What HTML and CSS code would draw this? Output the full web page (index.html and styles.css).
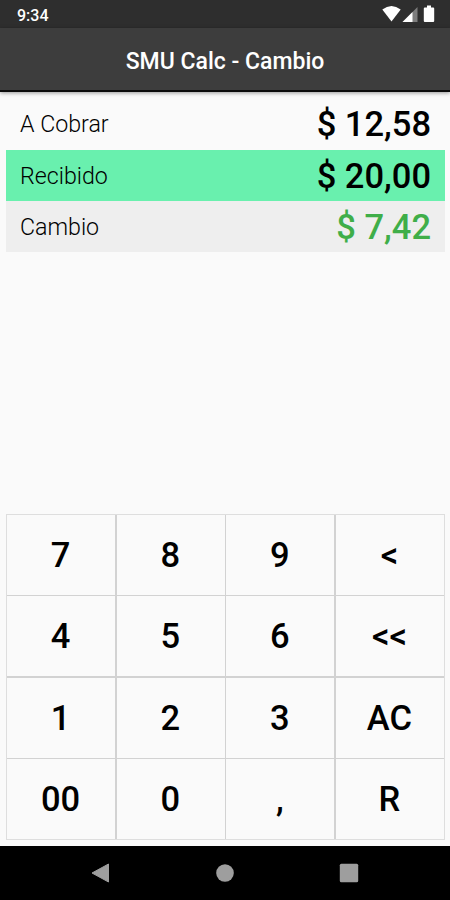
FILE: index.html
```html
<!DOCTYPE html>
<html lang="es">
<head>
    <meta charset="UTF-8">
    <meta name="viewport" content="width=device-width, initial-scale=1.0">
    <title>SMU Calc - Cambio</title>
    <link rel="stylesheet" href="styles.css">
</head>
<body>
    <div class="status-bar">
        <span class="clock">9:34</span>
        <svg class="status-icons" width="56" height="20" viewBox="0 0 56 20">
            <path d="M0.3 5.6 Q9.5 -1.4 18.7 5.6 L9.5 17.4 Z" fill="#fff"/>
            <path d="M35.5 3 V18 H20.5 Z" fill="#7d7d7d"/>
            <path d="M30.5 8 V18 H20.5 Z" fill="#fff"/>
            <path d="M45 1.5 h4 v2 h2.2 q1 0 1 1 v12.5 q0 1 -1 1 h-8.4 q-1 0 -1 -1 v-12.5 q0 -1 1 -1 h2.2 z" fill="#fff"/>
        </svg>
    </div>
    <header class="app-bar">
        <h1>SMU Calc - Cambio</h1>
    </header>
    <main>
        <div class="amounts">
            <div class="row">
                <span class="label">A Cobrar</span>
                <span class="value">$ 12,58</span>
            </div>
            <div class="row active">
                <span class="label">Recibido</span>
                <span class="value">$ 20,00</span>
            </div>
            <div class="row change">
                <span class="label">Cambio</span>
                <span class="value">$ 7,42</span>
            </div>
        </div>
        <div class="keypad">
            <button>7</button>
            <button>8</button>
            <button>9</button>
            <button>&lt;</button>
            <button>4</button>
            <button>5</button>
            <button>6</button>
            <button>&lt;&lt;</button>
            <button>1</button>
            <button>2</button>
            <button>3</button>
            <button>AC</button>
            <button>00</button>
            <button>0</button>
            <button>,</button>
            <button>R</button>
        </div>
    </main>
    <nav class="nav-bar">
        <svg width="20" height="20" viewBox="0 0 20 20"><path d="M17.5 1 V19 L1 10 Z" fill="#9e9e9e" stroke="#9e9e9e" stroke-linejoin="round"/></svg>
        <svg width="20" height="20" viewBox="0 0 20 20"><circle cx="10" cy="10" r="8.8" fill="#9e9e9e"/></svg>
        <svg width="20" height="20" viewBox="0 0 20 20"><rect x="0.8" y="0.8" width="18.4" height="18.4" rx="1.5" fill="#9e9e9e"/></svg>
    </nav>
</body>
</html>
```

FILE: styles.css
```css
:root {
    --bg-color: #fafafa;
    --bar-color: #3d3d3d;
    --active-color: #69f0ae;
    --change-color: #3fae49;
    --line-color: #d2d2d2;
}

* {
    box-sizing: border-box;
}

body {
    margin: 0;
    height: 100vh;
    display: flex;
    flex-direction: column;
    font-family: Roboto, sans-serif;
    background-color: var(--bg-color);
    color: #000;
    overflow: hidden;
}

.status-bar {
    height: 28px;
    padding: 0 12px 0 17px;
    display: flex;
    align-items: center;
    justify-content: space-between;
    background-color: #2e2e2e;
    color: white;
}

.clock {
    font-size: 16px;
    font-weight: 500;
    line-height: 26px;
    padding-top: 4px;
}

.app-bar {
    height: 64px;
    display: flex;
    align-items: center;
    justify-content: center;
    background-color: var(--bar-color);
    border-bottom: 2px solid #0c0c0c;
    box-shadow: 0 1px 4px rgba(0, 0, 0, 0.4);
    color: white;
}

.app-bar h1 {
    margin: 4px 0 0;
    font-size: 23px;
    font-weight: 500;
}

main {
    flex: 1;
    display: flex;
    flex-direction: column;
    justify-content: space-between;
    padding: 6px 5px 6px 6px;
}

.row {
    height: 51px;
    display: flex;
    align-items: center;
    justify-content: space-between;
    padding: 0 14px;
}

.row.active {
    height: 52px;
    background-color: var(--active-color);
    border-top: 1px solid var(--bg-color);
}

.row.change {
    background-color: #eee;
}

.label {
    font-size: 23.2px;
    font-weight: 300;
}

.value {
    font-size: 34.5px;
    font-weight: 500;
}

.active {
    background-clip: padding-box;
}

.change .value {
    color: var(--change-color);
}

.keypad {
    height: 326px;
    display: grid;
    grid-template-columns: repeat(4, 1fr);
    grid-template-rows: repeat(4, 1fr);
    gap: 1.5px;
    background-color: var(--line-color);
    border: 1px solid #dedede;
}

.keypad button {
    padding: 0 1px 0 0;
    border: none;
    background-color: var(--bg-color);
    color: #000;
    font-family: inherit;
    font-size: 34.5px;
    font-weight: 500;
}

.nav-bar {
    height: 54px;
    display: flex;
    align-items: center;
    justify-content: center;
    gap: 104px;
    background-color: #000;
}
```
